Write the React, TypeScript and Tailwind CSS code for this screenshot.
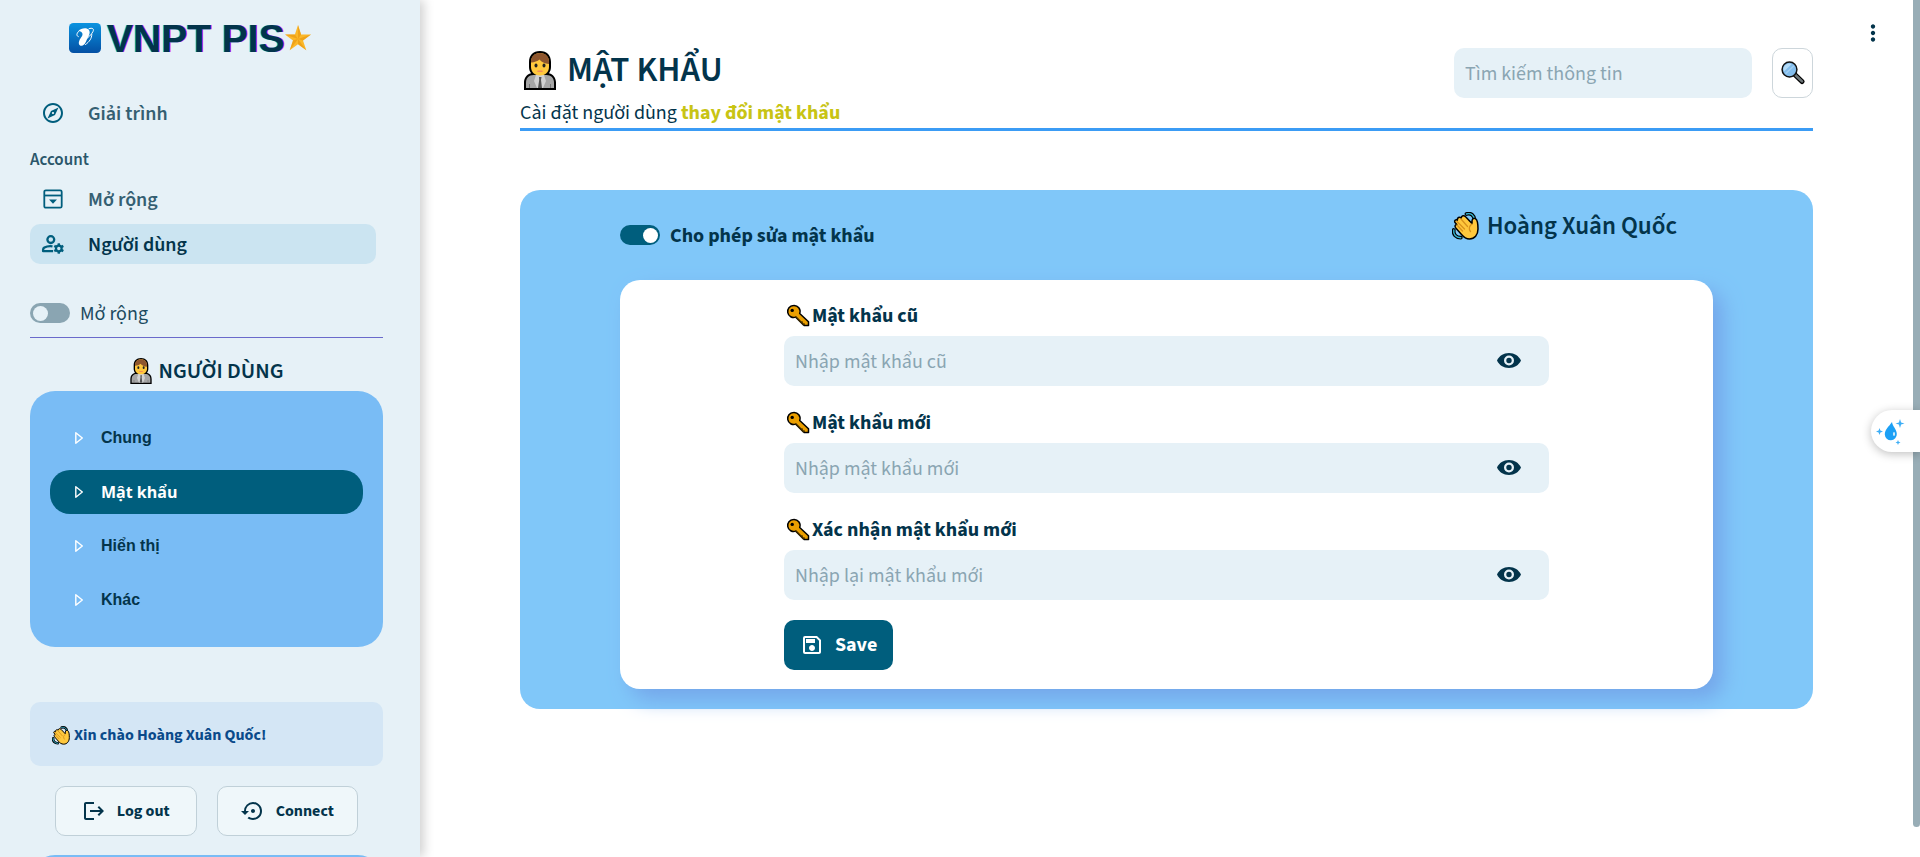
import { useState } from "react";
import type { ReactNode } from "react";
import {
  MdLogout,
  MdMoreVert,
  MdOutlineExplore,
  MdOutlineSave,
  MdSettingsBackupRestore,
} from "react-icons/md";

function LogoMark() {
  return (
    <svg viewBox="0 0 32 30" className="h-[30px] w-8 shrink-0" aria-hidden="true">
      <defs>
        <linearGradient id="logo-bg" x1="0" y1="0" x2="0" y2="1">
          <stop offset="0" stopColor="#0a93e0" />
          <stop offset="1" stopColor="#0450a4" />
        </linearGradient>
      </defs>
      <rect width="32" height="30" rx="4.5" fill="url(#logo-bg)" />
      <path
        d="M9.500 8C12 4.800 18 4.200 20 7c1.600 2.500.2 5-1.200 7.500-1.600 3-2.600 8.200-6.300 8.200-2.800 0-3.200-3-2.100-5.300 1.300-2.700 3.600-4.400 3-6.800-.5-1.700-1.900-2.400-3.900-2.600z"
        fill="#fff"
      />
      <path
        d="M9.500 8.500C7.300 10.800 7.300 13 9.300 13.600M20 5.700c3.500-1.200 5.300 0 4 2.800-1.600 3.300-4.500 6-8.500 8.500M22.800 11.500c0 3.800-2.300 7.300-6.300 10"
        fill="none"
        stroke="#fff"
        strokeWidth="1"
        strokeLinecap="round"
      />
    </svg>
  );
}

function Star() {
  return (
    <svg viewBox="0 0 26 26" className="size-[26px] shrink-0" aria-hidden="true">
      <path d="M13 0l3.100 9.500H26l-8 6 3.300 9.800-8.300-6-8.300 6L8 15.500l-8-6h9.900z" fill="#fbb829" />
      <path d="M13 14L13 0l3.100 9.500zM13 14l13-4.500-8 6zM13 14l8.300 11.300-8.300-6zM13 14L4.700 25.300 8 15.500zM13 14L0 9.500h9.900z" fill="#e8940f" opacity=".6" />
    </svg>
  );
}

function OfficeWorker({ className }: { className: string }) {
  return (
    <svg viewBox="0 0 32 39" className={className} aria-hidden="true">
      <path
        d="M16 0C9 0 5 4.500 5 11v5c0 2.500.8 4.500 2 6.200C2.500 23.500 0 27 0 31.500V39h32v-7.500c0-4.500-2.500-8-7-9.300 1.200-1.700 2-3.700 2-6.200v-5C27 4.500 23 0 16 0z"
        fill="#000"
      />
      <path d="M2 37v-5.500C2 27 5 24 9.500 24h13c4.500 0 7.500 3 7.500 7.500V37z" fill="#a6a6a6" />
      <path d="M12 24h8l2 6-3 7h-6l-3-7z" fill="#d2d2d2" />
      <path d="M15 26h2.500l-.5 3 1 8h-4l1.200-8z" fill="#555" />
      <path d="M5.500 37v-4M26.500 37v-4" stroke="#777" />
      <path d="M7 11c0-5 3.500-9 9-9s9 4 9 9v5c0 5-4 8.500-9 8.500S7 21 7 16z" fill="#ffc83d" />
      <path d="M7 11.500V10.500C7 5.500 10.500 2 16 2s9 3.500 9 8.500V13c-4.500-.5-7.500-2-9.500-4.500-2 1.800-5 2.800-8.500 3z" fill="#8e562e" />
      <ellipse cx="12" cy="14.500" rx="1.500" ry="2" fill="#222" />
      <ellipse cx="20" cy="14.500" rx="1.500" ry="2" fill="#222" />
      <path d="M14 20.300h4" stroke="#f28b5b" strokeWidth="1.600" strokeLinecap="round" />
    </svg>
  );
}

function WavingHand({ className }: { className: string }) {
  return (
    <svg viewBox="0 0 27 28" className={className} aria-hidden="true">
      <path
        d="M14.500 2C19 .600 22.200 3.500 22.500 8M1.800 18c-.8 4.500 2.200 7.500 7 7.700"
        fill="none"
        stroke="#000"
        strokeWidth="3.800"
        strokeLinecap="round"
      />
      <path
        d="M14.500 2C19 .600 22.200 3.500 22.500 8M1.800 18c-.8 4.500 2.200 7.500 7 7.700"
        fill="none"
        stroke="#35b9d6"
        strokeWidth="1.400"
        strokeLinecap="round"
      />
      <path
        d="M2.800 10.200C2 8.500 4 7 5.400 8.100 5 5.500 7.500 4.400 9.200 6 9.500 3.500 12 3 13.600 4.800L20 11.500V9c0-2.500 2.300-3.200 3.700-2.200C25.500 8 26 12 26 17c0 6-3.500 10-8.500 10-3.500 0-6-2-8-4.500L3.800 16c-1.500-2-.6-3.600 1-3.600z"
        fill="#ffc83d"
        stroke="#000"
        strokeWidth="1.500"
        strokeLinejoin="round"
      />
      <path d="M5 9.500l7.500 7.500M9 7l6.500 7.500M5 13l5.500 6M20 12c-3 2-3.500 5-1.500 7.500" fill="none" stroke="#d8921c" strokeWidth="1.300" strokeLinecap="round" />
    </svg>
  );
}

function KeyGlyph() {
  return (
    <svg viewBox="0 0 24 24" className="size-6 shrink-0" aria-hidden="true">
      <path
        d="M7.500 1.500a6 6 0 1 0 2.300 11.600l8.400 8.400h4.300v-3.800l-8.800-8.200A6 6 0 0 0 7.500 1.500z"
        fill="#eb9f00"
        stroke="#000"
        strokeWidth="1.500"
        strokeLinejoin="round"
      />
      <path d="M9.500 12.800l8 8.200M15 18.500l1.800-.6M17 20.500l1.800-.6" stroke="#3d2a00" strokeWidth="1.400" />
      <circle cx="6.200" cy="6.400" r="1.700" />
    </svg>
  );
}

function Magnifier() {
  return (
    <svg viewBox="0 0 24 24" className="size-6 shrink-0" aria-hidden="true">
      <path d="M13.500 13.300l7.500 7.200" stroke="#000" strokeWidth="5" strokeLinecap="round" />
      <path d="M14 13.800l7 6.600" stroke="#6d7679" strokeWidth="2.600" strokeLinecap="round" />
      <circle cx="8.500" cy="8.500" r="7.400" fill="#83bdec" stroke="#111" strokeWidth="1.500" />
      <path d="M3 10.500l7.500-7.300a5.600 5.600 0 0 0-7.500 7.300z" fill="#b5dcf8" />
      <path d="M4.500 12.700l8.500-8" stroke="#a4d0f3" strokeWidth="1.500" />
    </svg>
  );
}

function BoxMenuIcon() {
  return (
    <svg viewBox="0 0 24 24" className="size-6 shrink-0" fill="none" stroke="currentColor" strokeWidth="1.800" aria-hidden="true">
      <rect x="3.300" y="3.300" width="17.400" height="17.400" rx="1.500" />
      <path d="M3.300 8.500h17.400" />
      <path d="M8 12.500h8l-4 4.200z" fill="currentColor" stroke="none" />
    </svg>
  );
}

const gearTeeth = [0, 60, 120, 180, 240, 300];

function AccountGearIcon() {
  return (
    <svg viewBox="0 0 24 24" className="size-6 shrink-0" fill="none" stroke="currentColor" aria-hidden="true">
      <circle cx="9.800" cy="7.600" r="3.400" strokeWidth="2.300" />
      <path d="M11.500 14.300c-3-.5-5.800 0-8.100 1.300-.8.5-1.300 1.200-1.300 2.100v1.500h10" strokeWidth="2.300" strokeLinejoin="round" />
      <circle cx="17.800" cy="16.500" r="2.800" strokeWidth="2.200" />
      {gearTeeth.map((angle) => (
        <path key={angle} d="M17.800 13.400v-2.100" strokeWidth="2.400" transform={`rotate(${angle} 17.800 16.500)`} />
      ))}
    </svg>
  );
}

function Eye() {
  return (
    <svg viewBox="0 0 24 15" className="h-[15px] w-6" aria-hidden="true">
      <path
        fillRule="evenodd"
        d="M12 0C6.500 0 2.200 2.900 0 7.500 2.200 12.100 6.500 15 12 15s9.800-2.900 12-7.500C21.800 2.900 17.500 0 12 0zm0 12.500a5 5 0 1 1 0-10 5 5 0 0 1 0 10zm0-2.300a2.700 2.700 0 1 0 0-5.400 2.700 2.700 0 0 0 0 5.400z"
        fill="#03344b"
      />
    </svg>
  );
}

function Toggle({
  checked,
  onChange,
  knob,
  children,
}: {
  checked: boolean;
  onChange: (value: boolean) => void;
  knob: string;
  children: ReactNode;
}) {
  return (
    <label className="flex h-[30px] cursor-pointer items-center gap-[10px]">
      <input
        type="checkbox"
        role="switch"
        className="peer sr-only"
        checked={checked}
        onChange={(e) => onChange(e.target.checked)}
      />
      <span
        className={
          checked
            ? "flex h-5 w-10 items-center justify-end rounded-full bg-[#005e7d] px-[2px]"
            : "flex h-5 w-10 items-center rounded-full bg-[#8aa5b2] px-[3px]"
        }
      >
        <span className={`size-[15px] rounded-full ${knob}`} />
      </span>
      <span className="pt-[2px]">{children}</span>
    </label>
  );
}

function NavLink({ icon, label, active = false }: { icon: ReactNode; label: string; active?: boolean }) {
  return (
    <a
      href="#"
      className={
        active
          ? "mr-[7px] flex h-10 items-center gap-[23px] rounded-[10px] bg-[#cbe4f1] pl-[11px] text-[#03344b]"
          : "mr-[7px] flex h-10 items-center gap-[23px] rounded-[10px] pl-[11px] text-[#355f72]"
      }
    >
      <span className="text-[#005e7d]">{icon}</span>
      <span className="pt-[2px] font-semibold">{label}</span>
    </a>
  );
}

function MenuItem({ label, active, onSelect }: { label: string; active: boolean; onSelect: () => void }) {
  return (
    <button
      type="button"
      onClick={onSelect}
      className={
        active
          ? "flex h-11 w-full items-center gap-[17px] rounded-[20px] bg-[#005e7d] pl-6 font-['Open_Sans',sans-serif] text-[16px] font-bold text-white"
          : "flex h-11 w-full items-center gap-[17px] rounded-[20px] pl-6 font-['Liberation_Sans',sans-serif] text-[16px] font-bold text-[#03344b]"
      }
    >
      <svg viewBox="0 0 10 14" className="h-[14px] w-[10px]" aria-hidden="true">
        <path d="M1.800 1.800v10.400L8.300 7z" fill="none" stroke="#fff" strokeWidth="1.400" strokeLinejoin="round" />
      </svg>
      {label}
    </button>
  );
}

function PasswordField({ id, label, placeholder }: { id: string; label: string; placeholder: string }) {
  const [visible, setVisible] = useState(false);
  return (
    <div className="flex flex-col gap-1">
      <label htmlFor={id} className="flex h-8 items-center gap-[2px] pl-[2px] font-bold">
        <KeyGlyph />
        <span>{label}</span>
      </label>
      <div className="flex h-[50px] items-center rounded-[10px] bg-[#e6f1f7] pl-[11px] pr-7">
        <input
          id={id}
          type={visible ? "text" : "password"}
          placeholder={placeholder}
          className="min-w-0 flex-1 bg-transparent pt-[2px] outline-none placeholder:text-[#8aa5b2]"
        />
        <button type="button" aria-label="Show password" className="pb-[2px]" onClick={() => setVisible(!visible)}>
          <Eye />
        </button>
      </div>
    </div>
  );
}

function Sidebar() {
  const [expanded, setExpanded] = useState(false);
  const [current, setCurrent] = useState("Mật khẩu");
  return (
    <aside className="relative z-10 h-screen w-[420px] shrink-0 overflow-hidden bg-[#e6f1f7] pl-[30px] pr-[37px] shadow-[4px_0_10px_rgba(0,0,0,0.18)]">
      <div className="flex h-[93px] items-start pl-[39px] pt-[23px]">
        <LogoMark />
        <span className="pl-[6px] font-['Liberation_Sans',sans-serif] text-[39px] font-bold leading-8 [text-shadow:-1px_0_#22d3e6,1px_0_#e02be0]">
          VNPT PIS
        </span>
        <span className="pt-[2px]">
          <Star />
        </span>
      </div>
      <nav>
        <NavLink icon={<MdOutlineExplore className="size-6" />} label="Giải trình" />
        <p className="mb-[6px] mt-[14px] text-[17px] font-semibold leading-[26px] text-[#2a566a]">Account</p>
        <div className="flex flex-col gap-[5px]">
          <NavLink icon={<BoxMenuIcon />} label="Mở rộng" />
          <NavLink icon={<AccountGearIcon />} label="Người dùng" active />
        </div>
      </nav>
      <div className="mt-[34px] border-b border-[#6a6acb] pb-[9px]">
        <Toggle checked={expanded} onChange={setExpanded} knob="bg-[#e6f1f7]">
          <span className="text-[#1c4a5f]">Mở rộng</span>
        </Toggle>
      </div>
      <h2 className="mb-1 mt-[17px] flex h-8 items-center justify-center gap-[7px] text-[22px] font-semibold">
        <OfficeWorker className="h-[26px] w-[22px]" />
        NGƯỜI DÙNG
      </h2>
      <div className="flex flex-col gap-[10px] rounded-[25px] bg-[#79bcf5] px-5 py-[25px]">
        {["Chung", "Mật khẩu", "Hiển thị", "Khác"].map((item) => (
          <MenuItem key={item} label={item} active={item === current} onSelect={() => setCurrent(item)} />
        ))}
      </div>
      <div className="mt-[55px] flex h-16 items-center gap-1 rounded-[10px] bg-[#d4e6f5] pl-[22px] pt-[2px] text-[16px] font-bold text-[#0a4a8a]">
        <WavingHand className="h-[19px] w-[18px]" />
        Xin chào Hoàng Xuân Quốc!
      </div>
      <div className="mt-5 flex gap-5 px-[25px] text-[16px] font-bold">
        <button type="button" className="flex h-[50px] flex-1 items-center justify-center gap-[11px] rounded-[10px] border border-[#c0d0d8] bg-[#eff7fa]">
          <MdLogout className="size-6" />
          Log out
        </button>
        <button type="button" className="flex h-[50px] flex-1 items-center justify-center gap-[11px] rounded-[10px] border border-[#c0d0d8] bg-[#eff7fa]">
          <MdSettingsBackupRestore className="size-6" />
          Connect
        </button>
      </div>
      <div className="mt-[19px] h-16 rounded-[25px] bg-[#79bcf5]" />
    </aside>
  );
}

export default function App() {
  const [editable, setEditable] = useState(true);
  return (
    <div className="relative flex h-screen overflow-hidden bg-white font-['Source_Sans_Pro','Source_Sans_3','Noto_Sans_CJK_SC',sans-serif] text-[20px] leading-[30px] text-[#03344b]">
      <Sidebar />
      <main className="min-w-0 flex-1 pl-[100px] pr-[107px] pt-12">
        <header className="flex items-start justify-between border-b-[3px] border-[#3b9cf5]">
          <div>
            <h1 className="flex h-11 items-center gap-[11px] pl-1 text-[35px] font-semibold leading-[44px]">
              <OfficeWorker className="h-[39px] w-8" />
              MẬT KHẨU
            </h1>
            <p className="mt-[6px]">
              Cài đặt người dùng <strong className="font-bold text-[#c8c414]">thay đổi mật khẩu</strong>
            </p>
          </div>
          <form className="flex gap-5" onSubmit={(e) => e.preventDefault()}>
            <input
              type="search"
              aria-label="Tìm kiếm thông tin"
              placeholder="Tìm kiếm thông tin"
              className="h-[50px] w-[298px] rounded-[10px] bg-[#e6f1f7] px-[11px] pt-[2px] outline-none placeholder:text-[#8aa5b2]"
            />
            <button
              type="submit"
              aria-label="Search"
              className="flex h-[50px] w-[41px] items-center justify-center rounded-[10px] border border-[#cdd6db]"
            >
              <Magnifier />
            </button>
          </form>
        </header>

        <section className="mt-[59px] rounded-[20px] bg-[#80c7f9] px-[100px] pb-5 pt-5">
          <div className="mb-[30px] flex items-start justify-between">
            <div className="pt-[10px]">
              <Toggle checked={editable} onChange={setEditable} knob="bg-white">
                <span className="font-bold">Cho phép sửa mật khẩu</span>
              </Toggle>
            </div>
            <h2 className="flex h-8 items-center gap-2 pr-9 text-[25px] font-semibold">
              <WavingHand className="h-7 w-[27px]" />
              Hoàng Xuân Quốc
            </h2>
          </div>
          <form
            className="rounded-[20px] bg-white px-[15%] pb-[19px] pt-5 shadow-[10px_10px_20px_#74a6ea]"
            onSubmit={(e) => e.preventDefault()}
          >
            <div className="flex flex-col gap-[21px]">
              <PasswordField id="old" label="Mật khẩu cũ" placeholder="Nhập mật khẩu cũ" />
              <PasswordField id="new" label="Mật khẩu mới" placeholder="Nhập mật khẩu mới" />
              <PasswordField id="confirm" label="Xác nhận mật khẩu mới" placeholder="Nhập lại mật khẩu mới" />
            </div>
            <button
              type="submit"
              className="mt-5 flex h-[50px] items-center gap-[11px] rounded-[10px] bg-[#005e7d] px-4 font-bold text-white"
            >
              <MdOutlineSave className="size-6" />
              Save
            </button>
          </form>
        </section>
      </main>

      <button type="button" aria-label="Menu" className="absolute right-[34px] top-5">
        <MdMoreVert className="size-[26px]" />
      </button>
      <div className="absolute right-0 top-0 h-[96.5%] w-[7px] rounded-b-full bg-[#98adb6]" />
      <button
        type="button"
        aria-label="Assistant"
        className="absolute right-0 top-[410px] flex h-[42px] w-[49px] items-center rounded-l-full bg-white pl-[5px] shadow-[0_2px_10px_rgba(0,0,0,0.25)]"
      >
        <svg viewBox="0 0 30 28" className="h-7 w-[30px]" fill="#1ca0f5" aria-hidden="true">
          <path d="M16 5c.4 4.500 4.800 7 4.800 12a6 6 0 0 1-12 .5C8.800 12.500 13 9.500 16 5z" />
          <ellipse cx="18" cy="17" rx="1" ry="2" fill="#d9effd" />
          <path d="M24 2l1.100 3.400L28.500 6.500l-3.400 1.100L24 11l-1.100-3.400-3.400-1.100 3.400-1.100zM3.500 11l.9 2.600 2.600.9-2.600.9-.9 2.600-.9-2.600L0 14.500l2.600-.9zM22 23l.7 1.800 1.800.7-1.800.7L22 28l-.7-1.800-1.800-.7 1.800-.7z" opacity=".85" />
        </svg>
      </button>
    </div>
  );
}
